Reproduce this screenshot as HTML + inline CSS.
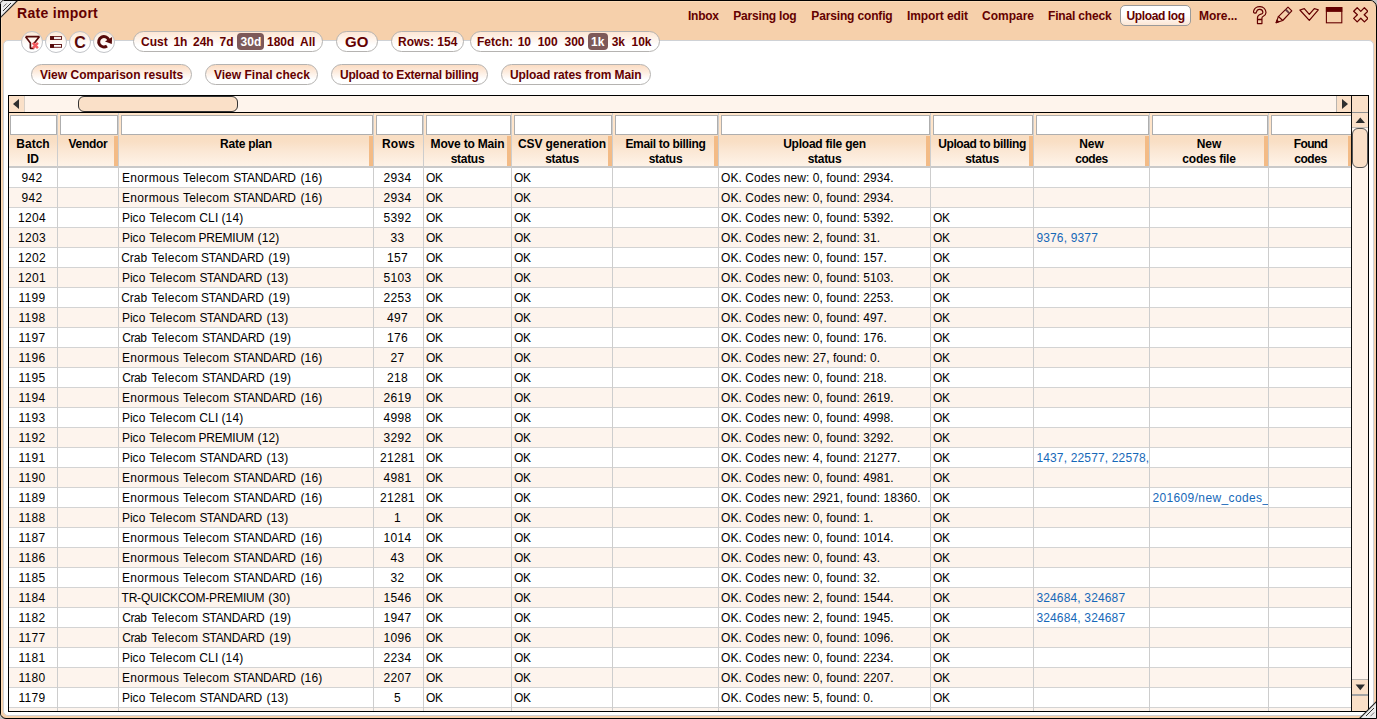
<!DOCTYPE html>
<html><head><meta charset="utf-8"><title>Rate import</title>
<style>
html,body{margin:0;padding:0;}
body{width:1377px;height:719px;overflow:hidden;background:#c4c4c4;font-family:"Liberation Sans",sans-serif;font-size:12px;color:#000;position:relative;}
#win{position:absolute;left:0;top:0;width:1375px;height:717px;border:1px solid #000;background:#f6d0ab;border-radius:0 7px 0 6px;overflow:hidden;}
#abs{position:absolute;left:-1px;top:-1px;width:1377px;height:719px;}
#abs div,#abs span,#abs b,#abs i,#abs svg{position:absolute;box-sizing:border-box;}
#hl1{left:1px;top:1px;width:1375px;height:1px;background:#fcdcb9;}
#hl2{left:1px;top:1px;width:1px;height:717px;background:#fcdcb9;}
#panel{left:3px;top:40px;width:1371px;height:676px;background:#fff;border:1px solid #cfd2d6;border-radius:5px;}
.t{font-weight:bold;color:#640000;white-space:nowrap;line-height:16px;height:16px;}
#title{left:17px;top:3px;font-size:14px;letter-spacing:0.3px;line-height:20px;height:20px;}
.m{top:8px;}
#ulog{left:1120px;top:5px;width:71px;height:21px;background:linear-gradient(#fff 0%,#fff 45%,#fce6d4 100%);border:1px solid #9a9a9a;border-radius:5px;}
.circ{top:31px;width:22px;height:22px;border-radius:11px;border:1px solid #c2c4c8;background:linear-gradient(#fde9d6 0%,#fef6ef 40%,#ffffff 65%,#ffffff 100%);}
.pill{height:21px;border-radius:11px;border:1px solid #b5b3b1;background:linear-gradient(#fde6d4 0%,#fef3ea 35%,#ffffff 70%,#ffffff 100%);}
.pill.b{background:linear-gradient(#fbdcc3 0%,#fdebdd 35%,#ffffff 75%,#ffffff 100%);}
.sel{background:#7d5959;border-radius:4px;}
.w{color:#fff;}
/* grid */
#gborder{left:8px;top:95px;width:1361px;height:617px;border:1px solid #000;}
#hsb{left:9px;top:96px;width:1342px;height:16px;background:#fef4ec;}
.sbtn{background:#fae0c8;}
#hthumb{left:78px;top:96px;width:160px;height:16px;background:#fae0c8;border:1px solid #333;border-radius:6px;}
#hline{left:9px;top:112px;width:1343px;height:1px;background:#000;}
#vline{left:1351px;top:96px;width:1px;height:615px;background:#111;}
#vsb{left:1352px;top:96px;width:16px;height:615px;background:#fef4ec;}
#vthumb{left:1352px;top:128px;width:16px;height:40px;background:#fae0c8;border:1px solid #555;border-radius:6px;}
#frow{left:9px;top:113px;width:1342px;height:22px;background:#ffe5ca;}
#hrow{left:9px;top:135px;width:1342px;height:31px;background:linear-gradient(#f9dec3 0%,#f9dfc5 22%,#fbe7d4 50%,#fef3e8 100%);}
#hbot{left:9px;top:166px;width:1342px;height:2px;background:#c9c9c9;}
.fi{top:115px;height:20px;background:#fff;border:1px solid #aeaeae;}
.hc{top:137px;height:30px;text-align:center;font-weight:bold;line-height:15px;}
.hc span{left:0;right:0;top:0;width:100%;}
.hc u{text-decoration:none;}
.rz{right:0;top:-1px;width:4px;height:30px;background:#f3bb86;}
.r{left:9px;width:1342px;height:20px;background:#fff;border-bottom:1px solid #d3d3d3;}
.r.a{background:#fdf4ed;}
.r b{top:1px;height:18px;line-height:18px;font-weight:normal;white-space:nowrap;overflow:hidden;margin-left:-9px;}
.r b i{top:0;font-style:normal;white-space:nowrap;line-height:18px;}
.r b.c{text-align:center;padding-right:2px;}
.r b.l,.r b.k{padding-left:2.4px;}
.r b.k{color:#1668b8;}
.vs{top:113px;width:1px;height:598px;background:#cdcdcd;}

</style></head>
<body>
<div id="win"><div id="abs">
<div id="hl1"></div><div id="hl2"></div>
<div id="panel"></div>
<!-- top-left grip -->
<svg style="left:0;top:0" width="19" height="19" viewBox="0 0 19 19"><polygon points="0,0 18,0 0,18" fill="#ececec"/><line x1="17.5" y1="0.5" x2="0.5" y2="17.5" stroke="#222" stroke-width="1.2"/><line x1="11" y1="3" x2="3" y2="11" stroke="#333" stroke-width="1"/><line x1="6.7" y1="3.4" x2="3.4" y2="6.7" stroke="#777" stroke-width="1"/><polygon points="0,0 3,0 0,3" fill="#444"/></svg>
<span class="t" id="title">Rate import</span>
<span class="t m" style="left:688px;letter-spacing:-0.25px">Inbox</span>
<span class="t m" style="left:733.3px;letter-spacing:-0.2px">Parsing log</span>
<span class="t m" style="left:811.3px;letter-spacing:-0.15px">Parsing config</span>
<span class="t m" style="left:907px;letter-spacing:-0.1px">Import edit</span>
<span class="t m" style="left:982px">Compare</span>
<span class="t m" style="left:1048px;letter-spacing:-0.18px">Final check</span>
<div id="ulog"></div>
<span class="t m" style="left:1126.5px;letter-spacing:-0.38px">Upload log</span>
<span class="t m" style="left:1199px;letter-spacing:-0.06px">More...</span>
<!-- title icons -->
<svg style="left:1253px;top:5px" width="15" height="21" viewBox="0 0 15 21" fill="none" stroke="#640000" stroke-width="1.2" stroke-linejoin="round"><path d="M0.5 6.4 A6.35 6.35 0 0 1 13.0 7.46 Q12.9 10.1 10.3 11.2 Q8.95 11.8 8.95 12.9 L8.95 18.6 L4.45 18.6 L4.45 12.9 Q4.45 10.4 7.4 9.3 Q9.9 8.6 9.9 7.46 A3.25 3.25 0 0 0 3.5 6.8 A1.5 1.5 0 0 1 0.5 6.4 Z"/><path d="M4.45 14.5 L8.95 14.5" stroke-width="1.7"/></svg>
<svg style="left:1275px;top:6px" width="18" height="18" viewBox="0 0 18 18" fill="none" stroke="#640000" stroke-width="1.15" stroke-linejoin="round"><path d="M3.4 10.55 L13.0 1.15 L16.8 4.9 L7.75 14.5 Z"/><path d="M3.4 10.55 L1.15 16.6 L7.75 14.5"/><path d="M1.15 16.6 L2.0 14.2 L3.7 15.8 Z" fill="#640000"/><path d="M10.6 3.5 L14.5 7.35" stroke="#6a3a42" stroke-width="1.9"/></svg>
<svg style="left:1299px;top:7px" width="21" height="16" viewBox="0 0 21 16" fill="none" stroke="#640000" stroke-width="1.2" stroke-linejoin="round"><path d="M0.9 3 L5.3 1.6 L10.3 7.4 L15.3 1.6 L19.3 2.8 L10.3 13.4 Z"/></svg>
<svg style="left:1325px;top:6px" width="18" height="18" viewBox="0 0 18 18"><rect x="1.4" y="1.6" width="15.4" height="15.2" fill="none" stroke="#640000" stroke-width="1.1"/><rect x="0.9" y="1.1" width="16.4" height="4.8" fill="#640000"/></svg>
<svg style="left:1352.75px;top:6.95px" width="15.6" height="15.6" viewBox="0 0 16 16" fill="none" stroke="#640000" stroke-width="1.3" stroke-linejoin="round"><polygon points="4.3,0.7 8.0,4.5 11.7,0.7 15.3,4.3 11.5,8.0 15.3,11.7 11.7,15.3 8.0,11.5 4.3,15.3 0.7,11.7 4.5,8.0 0.7,4.3"/></svg>
<!-- toolbar -->
<div class="circ" style="left:21px"></div>
<div class="circ" style="left:45px"></div>
<div class="circ" style="left:69px"></div>
<div class="circ" style="left:93px"></div>
<svg style="left:21px;top:31px" width="22" height="22" viewBox="0 0 22 22"><path d="M4.6 5.7 L18.3 5.7 L13 12.6 M4.6 5.7 L9.4 12 L9.4 17.3 L13.2 17.3" fill="none" stroke="#560a0a" stroke-width="1.7" stroke-linejoin="bevel"/><path d="M11.7 11.9 L16.9 17.1 M16.9 11.9 L11.7 17.1" stroke="#f25a5f" stroke-width="2.5"/></svg>
<svg style="left:45px;top:31px" width="22" height="22" viewBox="0 0 22 22"><rect x="5.6" y="5.6" width="10.9" height="2.8" fill="#fff" stroke="#6a2020" stroke-width="1"/><rect x="5.1" y="5.1" width="3.9" height="3.8" fill="#560a0a"/><rect x="5.6" y="13.5" width="10.9" height="2.8" fill="#fff" stroke="#6a2020" stroke-width="1"/><rect x="5.1" y="13" width="3.9" height="3.8" fill="#560a0a"/></svg>
<span class="t" style="left:74.3px;top:34px;font-size:16px;line-height:18px;height:18px;color:#5a0808">C</span>
<svg style="left:93px;top:31px" width="22" height="22" viewBox="0 0 22 22"><path d="M13.96 15.01 A5.2 5.2 0 1 1 15.72 8.85" fill="none" stroke="#560a0a" stroke-width="3"/><path d="M19.1 6 L18.8 12.9 L12 10.5 Z" fill="#560a0a"/></svg>
<div class="pill" style="left:133px;top:31px;width:190px"></div>
<div class="pill" style="left:336px;top:31px;width:42px"></div>
<div class="pill" style="left:391px;top:31px;width:73px"></div>
<div class="pill" style="left:470px;top:31px;width:190px"></div>
<div class="sel" style="left:237px;top:33px;width:27px;height:17px"></div>
<div class="sel" style="left:588px;top:33px;width:20px;height:17px"></div>
<span class="t" style="left:141px;top:34px">Cust</span>
<span class="t" style="left:173.4px;top:34px">1h</span>
<span class="t" style="left:193px;top:34px">24h</span>
<span class="t" style="left:219.6px;top:34px">7d</span>
<span class="t w" style="left:240.6px;top:34px">30d</span>
<span class="t" style="left:267px;top:34px">180d</span>
<span class="t" style="left:300px;top:34px">All</span>
<span class="t" style="left:345px;top:34px;font-size:15px">GO</span>
<span class="t" style="left:398px;top:34px">Rows: 154</span>
<span class="t" style="left:477px;top:34px">Fetch:</span>
<span class="t" style="left:517.7px;top:34px">10</span>
<span class="t" style="left:537.7px;top:34px">100</span>
<span class="t" style="left:564.5px;top:34px">300</span>
<span class="t w" style="left:591px;top:34px">1k</span>
<span class="t" style="left:611.7px;top:34px">3k</span>
<span class="t" style="left:631.5px;top:34px">10k</span>
<!-- button row -->
<div class="pill b" style="left:31px;top:64px;width:161px"></div>
<div class="pill b" style="left:205px;top:64px;width:113px"></div>
<div class="pill b" style="left:331px;top:64px;width:157px"></div>
<div class="pill b" style="left:501px;top:64px;width:150px"></div>
<span class="t" style="left:40px;top:67px">View Comparison results</span>
<span class="t" style="left:214px;top:67px">View Final check</span>
<span class="t" style="left:340px;top:67px;letter-spacing:-0.23px">Upload to External billing</span>
<span class="t" style="left:510px;top:67px;letter-spacing:-0.085px">Upload rates from Main</span>
<!-- grid background -->
<div id="frow"></div>
<div id="hrow"></div>
<div id="hbot"></div>
<div id="grid">
<div class="fi" style="left:10px;width:47px"></div>
<div class="hc" style="left:9px;width:48px"><span><u style="letter-spacing:0.00px">Batch</u><br><u style="letter-spacing:0.00px">ID</u></span></div>
<div class="fi" style="left:60px;width:58px"></div>
<div class="hc" style="left:58px;width:60px"><span><u style="letter-spacing:-0.30px">Vendor</u></span><i class="rz"></i></div>
<div class="fi" style="left:121px;width:252px"></div>
<div class="hc" style="left:119px;width:254px"><span><u style="letter-spacing:-0.25px">Rate plan</u></span><i class="rz"></i></div>
<div class="fi" style="left:376px;width:47px"></div>
<div class="hc" style="left:374px;width:49px"><span><u style="letter-spacing:0.30px">Rows</u></span></div>
<div class="fi" style="left:426px;width:85px"></div>
<div class="hc" style="left:424px;width:87px"><span><u style="letter-spacing:-0.18px">Move to Main</u><br><u style="letter-spacing:-0.30px">status</u></span><i class="rz"></i></div>
<div class="fi" style="left:514px;width:98px"></div>
<div class="hc" style="left:512px;width:100px"><span><u style="letter-spacing:-0.08px">CSV generation</u><br><u style="letter-spacing:-0.30px">status</u></span><i class="rz"></i></div>
<div class="fi" style="left:615px;width:103px"></div>
<div class="hc" style="left:613px;width:105px"><span><u style="letter-spacing:-0.32px">Email to billing</u><br><u style="letter-spacing:-0.30px">status</u></span><i class="rz"></i></div>
<div class="fi" style="left:721px;width:209px"></div>
<div class="hc" style="left:719px;width:211px"><span><u style="letter-spacing:-0.22px">Upload file gen</u><br><u style="letter-spacing:-0.30px">status</u></span><i class="rz"></i></div>
<div class="fi" style="left:933px;width:100px"></div>
<div class="hc" style="left:931px;width:102px"><span><u style="letter-spacing:-0.37px">Upload to billing</u><br><u style="letter-spacing:-0.30px">status</u></span><i class="rz"></i></div>
<div class="fi" style="left:1036px;width:113px"></div>
<div class="hc" style="left:1034px;width:115px"><span><u style="letter-spacing:0.00px">New</u><br><u style="letter-spacing:-0.40px">codes</u></span><i class="rz"></i></div>
<div class="fi" style="left:1152px;width:116px"></div>
<div class="hc" style="left:1150px;width:118px"><span><u style="letter-spacing:0.00px">New</u><br><u style="letter-spacing:-0.20px">codes file</u></span><i class="rz"></i></div>
<div class="fi" style="left:1271px;width:81px"></div>
<div class="hc" style="left:1269px;width:83px"><span><u style="letter-spacing:-0.60px">Found</u><br><u style="letter-spacing:-0.40px">codes</u></span><i class="rz"></i></div>
<div class="r" style="top:168px">
<b class="c" style="left:9px;width:48px;letter-spacing:0.3px">942</b>
<b class="p" style="left:119px;width:254px"><i style="left:2.9px;letter-spacing:0.36px">Enormous</i><i style="left:63.9px;letter-spacing:0.28px">Telecom</i><i style="left:114.2px;letter-spacing:-0.33px">STANDARD</i><i style="left:181.4px;letter-spacing:0.17px">(16)</i></b>
<b class="c" style="left:374px;width:49px;letter-spacing:0.3px">2934</b>
<b class="l" style="left:424px;width:87px;letter-spacing:-0.4px;padding-left:2px">OK</b>
<b class="l" style="left:512px;width:100px;letter-spacing:-0.4px;padding-left:2px">OK</b>
<b class="l" style="left:719px;width:211px;letter-spacing:0.06px;padding-left:2.1px">OK. Codes new: 0, found: 2934.</b>
</div>
<div class="r a" style="top:188px">
<b class="c" style="left:9px;width:48px;letter-spacing:0.3px">942</b>
<b class="p" style="left:119px;width:254px"><i style="left:2.9px;letter-spacing:0.36px">Enormous</i><i style="left:63.9px;letter-spacing:0.28px">Telecom</i><i style="left:114.2px;letter-spacing:-0.33px">STANDARD</i><i style="left:181.4px;letter-spacing:0.17px">(16)</i></b>
<b class="c" style="left:374px;width:49px;letter-spacing:0.3px">2934</b>
<b class="l" style="left:424px;width:87px;letter-spacing:-0.4px;padding-left:2px">OK</b>
<b class="l" style="left:512px;width:100px;letter-spacing:-0.4px;padding-left:2px">OK</b>
<b class="l" style="left:719px;width:211px;letter-spacing:0.06px;padding-left:2.1px">OK. Codes new: 0, found: 2934.</b>
</div>
<div class="r" style="top:208px">
<b class="c" style="left:9px;width:48px;letter-spacing:0.3px">1204</b>
<b class="p" style="left:119px;width:254px"><i style="left:2.9px;letter-spacing:0.03px">Pico</i><i style="left:30.5px;letter-spacing:0.28px">Telecom</i><i style="left:80.3px;letter-spacing:0.15px">CLI</i><i style="left:102.4px;letter-spacing:0.17px">(14)</i></b>
<b class="c" style="left:374px;width:49px;letter-spacing:0.3px">5392</b>
<b class="l" style="left:424px;width:87px;letter-spacing:-0.4px;padding-left:2px">OK</b>
<b class="l" style="left:512px;width:100px;letter-spacing:-0.4px;padding-left:2px">OK</b>
<b class="l" style="left:719px;width:211px;letter-spacing:0.06px;padding-left:2.1px">OK. Codes new: 0, found: 5392.</b>
<b class="l" style="left:931px;width:102px;letter-spacing:-0.4px;padding-left:2px">OK</b>
</div>
<div class="r a" style="top:228px">
<b class="c" style="left:9px;width:48px;letter-spacing:0.3px">1203</b>
<b class="p" style="left:119px;width:254px"><i style="left:2.9px;letter-spacing:0.03px">Pico</i><i style="left:30.5px;letter-spacing:0.28px">Telecom</i><i style="left:79.6px;letter-spacing:-0.23px">PREMIUM</i><i style="left:138.5px;letter-spacing:0.17px">(12)</i></b>
<b class="c" style="left:374px;width:49px;letter-spacing:0.3px">33</b>
<b class="l" style="left:424px;width:87px;letter-spacing:-0.4px;padding-left:2px">OK</b>
<b class="l" style="left:512px;width:100px;letter-spacing:-0.4px;padding-left:2px">OK</b>
<b class="l" style="left:719px;width:211px;letter-spacing:0.06px;padding-left:2.1px">OK. Codes new: 2, found: 31.</b>
<b class="l" style="left:931px;width:102px;letter-spacing:-0.4px;padding-left:2px">OK</b>
<b class="k" style="left:1034px;width:115px;letter-spacing:0.15px">9376, 9377</b>
</div>
<div class="r" style="top:248px">
<b class="c" style="left:9px;width:48px;letter-spacing:0.3px">1202</b>
<b class="p" style="left:119px;width:254px"><i style="left:2.2px;letter-spacing:0.00px">Crab</i><i style="left:32.6px;letter-spacing:0.28px">Telecom</i><i style="left:82.1px;letter-spacing:-0.33px">STANDARD</i><i style="left:149.2px;letter-spacing:0.17px">(19)</i></b>
<b class="c" style="left:374px;width:49px;letter-spacing:0.3px">157</b>
<b class="l" style="left:424px;width:87px;letter-spacing:-0.4px;padding-left:2px">OK</b>
<b class="l" style="left:512px;width:100px;letter-spacing:-0.4px;padding-left:2px">OK</b>
<b class="l" style="left:719px;width:211px;letter-spacing:0.06px;padding-left:2.1px">OK. Codes new: 0, found: 157.</b>
<b class="l" style="left:931px;width:102px;letter-spacing:-0.4px;padding-left:2px">OK</b>
</div>
<div class="r a" style="top:268px">
<b class="c" style="left:9px;width:48px;letter-spacing:0.3px">1201</b>
<b class="p" style="left:119px;width:254px"><i style="left:2.9px;letter-spacing:0.03px">Pico</i><i style="left:30.5px;letter-spacing:0.28px">Telecom</i><i style="left:80.4px;letter-spacing:-0.33px">STANDARD</i><i style="left:147.5px;letter-spacing:0.17px">(13)</i></b>
<b class="c" style="left:374px;width:49px;letter-spacing:0.3px">5103</b>
<b class="l" style="left:424px;width:87px;letter-spacing:-0.4px;padding-left:2px">OK</b>
<b class="l" style="left:512px;width:100px;letter-spacing:-0.4px;padding-left:2px">OK</b>
<b class="l" style="left:719px;width:211px;letter-spacing:0.06px;padding-left:2.1px">OK. Codes new: 0, found: 5103.</b>
<b class="l" style="left:931px;width:102px;letter-spacing:-0.4px;padding-left:2px">OK</b>
</div>
<div class="r" style="top:288px">
<b class="c" style="left:9px;width:48px;letter-spacing:0.3px">1199</b>
<b class="p" style="left:119px;width:254px"><i style="left:2.2px;letter-spacing:0.00px">Crab</i><i style="left:32.6px;letter-spacing:0.28px">Telecom</i><i style="left:82.1px;letter-spacing:-0.33px">STANDARD</i><i style="left:149.2px;letter-spacing:0.17px">(19)</i></b>
<b class="c" style="left:374px;width:49px;letter-spacing:0.3px">2253</b>
<b class="l" style="left:424px;width:87px;letter-spacing:-0.4px;padding-left:2px">OK</b>
<b class="l" style="left:512px;width:100px;letter-spacing:-0.4px;padding-left:2px">OK</b>
<b class="l" style="left:719px;width:211px;letter-spacing:0.06px;padding-left:2.1px">OK. Codes new: 0, found: 2253.</b>
<b class="l" style="left:931px;width:102px;letter-spacing:-0.4px;padding-left:2px">OK</b>
</div>
<div class="r a" style="top:308px">
<b class="c" style="left:9px;width:48px;letter-spacing:0.3px">1198</b>
<b class="p" style="left:119px;width:254px"><i style="left:2.9px;letter-spacing:0.03px">Pico</i><i style="left:30.5px;letter-spacing:0.28px">Telecom</i><i style="left:80.4px;letter-spacing:-0.33px">STANDARD</i><i style="left:147.5px;letter-spacing:0.17px">(13)</i></b>
<b class="c" style="left:374px;width:49px;letter-spacing:0.3px">497</b>
<b class="l" style="left:424px;width:87px;letter-spacing:-0.4px;padding-left:2px">OK</b>
<b class="l" style="left:512px;width:100px;letter-spacing:-0.4px;padding-left:2px">OK</b>
<b class="l" style="left:719px;width:211px;letter-spacing:0.06px;padding-left:2.1px">OK. Codes new: 0, found: 497.</b>
<b class="l" style="left:931px;width:102px;letter-spacing:-0.4px;padding-left:2px">OK</b>
</div>
<div class="r" style="top:328px">
<b class="c" style="left:9px;width:48px;letter-spacing:0.3px">1197</b>
<b class="p" style="left:119px;width:254px"><i style="left:3.2px;letter-spacing:-0.40px">Crab</i><i style="left:32.6px;letter-spacing:0.28px">Telecom</i><i style="left:82.9px;letter-spacing:-0.33px">STANDARD</i><i style="left:150.2px;letter-spacing:0.17px">(19)</i></b>
<b class="c" style="left:374px;width:49px;letter-spacing:0.3px">176</b>
<b class="l" style="left:424px;width:87px;letter-spacing:-0.4px;padding-left:2px">OK</b>
<b class="l" style="left:512px;width:100px;letter-spacing:-0.4px;padding-left:2px">OK</b>
<b class="l" style="left:719px;width:211px;letter-spacing:0.06px;padding-left:2.1px">OK. Codes new: 0, found: 176.</b>
<b class="l" style="left:931px;width:102px;letter-spacing:-0.4px;padding-left:2px">OK</b>
</div>
<div class="r a" style="top:348px">
<b class="c" style="left:9px;width:48px;letter-spacing:0.3px">1196</b>
<b class="p" style="left:119px;width:254px"><i style="left:2.9px;letter-spacing:0.36px">Enormous</i><i style="left:63.9px;letter-spacing:0.28px">Telecom</i><i style="left:114.2px;letter-spacing:-0.33px">STANDARD</i><i style="left:181.4px;letter-spacing:0.17px">(16)</i></b>
<b class="c" style="left:374px;width:49px;letter-spacing:0.3px">27</b>
<b class="l" style="left:424px;width:87px;letter-spacing:-0.4px;padding-left:2px">OK</b>
<b class="l" style="left:512px;width:100px;letter-spacing:-0.4px;padding-left:2px">OK</b>
<b class="l" style="left:719px;width:211px;letter-spacing:0.06px;padding-left:2.1px">OK. Codes new: 27, found: 0.</b>
<b class="l" style="left:931px;width:102px;letter-spacing:-0.4px;padding-left:2px">OK</b>
</div>
<div class="r" style="top:368px">
<b class="c" style="left:9px;width:48px;letter-spacing:0.3px">1195</b>
<b class="p" style="left:119px;width:254px"><i style="left:3.2px;letter-spacing:-0.40px">Crab</i><i style="left:32.6px;letter-spacing:0.28px">Telecom</i><i style="left:82.9px;letter-spacing:-0.33px">STANDARD</i><i style="left:150.2px;letter-spacing:0.17px">(19)</i></b>
<b class="c" style="left:374px;width:49px;letter-spacing:0.3px">218</b>
<b class="l" style="left:424px;width:87px;letter-spacing:-0.4px;padding-left:2px">OK</b>
<b class="l" style="left:512px;width:100px;letter-spacing:-0.4px;padding-left:2px">OK</b>
<b class="l" style="left:719px;width:211px;letter-spacing:0.06px;padding-left:2.1px">OK. Codes new: 0, found: 218.</b>
<b class="l" style="left:931px;width:102px;letter-spacing:-0.4px;padding-left:2px">OK</b>
</div>
<div class="r a" style="top:388px">
<b class="c" style="left:9px;width:48px;letter-spacing:0.3px">1194</b>
<b class="p" style="left:119px;width:254px"><i style="left:2.9px;letter-spacing:0.36px">Enormous</i><i style="left:63.9px;letter-spacing:0.28px">Telecom</i><i style="left:114.2px;letter-spacing:-0.33px">STANDARD</i><i style="left:181.4px;letter-spacing:0.17px">(16)</i></b>
<b class="c" style="left:374px;width:49px;letter-spacing:0.3px">2619</b>
<b class="l" style="left:424px;width:87px;letter-spacing:-0.4px;padding-left:2px">OK</b>
<b class="l" style="left:512px;width:100px;letter-spacing:-0.4px;padding-left:2px">OK</b>
<b class="l" style="left:719px;width:211px;letter-spacing:0.06px;padding-left:2.1px">OK. Codes new: 0, found: 2619.</b>
<b class="l" style="left:931px;width:102px;letter-spacing:-0.4px;padding-left:2px">OK</b>
</div>
<div class="r" style="top:408px">
<b class="c" style="left:9px;width:48px;letter-spacing:0.3px">1193</b>
<b class="p" style="left:119px;width:254px"><i style="left:2.9px;letter-spacing:0.03px">Pico</i><i style="left:30.5px;letter-spacing:0.28px">Telecom</i><i style="left:80.3px;letter-spacing:0.15px">CLI</i><i style="left:102.4px;letter-spacing:0.17px">(14)</i></b>
<b class="c" style="left:374px;width:49px;letter-spacing:0.3px">4998</b>
<b class="l" style="left:424px;width:87px;letter-spacing:-0.4px;padding-left:2px">OK</b>
<b class="l" style="left:512px;width:100px;letter-spacing:-0.4px;padding-left:2px">OK</b>
<b class="l" style="left:719px;width:211px;letter-spacing:0.06px;padding-left:2.1px">OK. Codes new: 0, found: 4998.</b>
<b class="l" style="left:931px;width:102px;letter-spacing:-0.4px;padding-left:2px">OK</b>
</div>
<div class="r a" style="top:428px">
<b class="c" style="left:9px;width:48px;letter-spacing:0.3px">1192</b>
<b class="p" style="left:119px;width:254px"><i style="left:2.9px;letter-spacing:0.03px">Pico</i><i style="left:30.5px;letter-spacing:0.28px">Telecom</i><i style="left:79.6px;letter-spacing:-0.23px">PREMIUM</i><i style="left:138.5px;letter-spacing:0.17px">(12)</i></b>
<b class="c" style="left:374px;width:49px;letter-spacing:0.3px">3292</b>
<b class="l" style="left:424px;width:87px;letter-spacing:-0.4px;padding-left:2px">OK</b>
<b class="l" style="left:512px;width:100px;letter-spacing:-0.4px;padding-left:2px">OK</b>
<b class="l" style="left:719px;width:211px;letter-spacing:0.06px;padding-left:2.1px">OK. Codes new: 0, found: 3292.</b>
<b class="l" style="left:931px;width:102px;letter-spacing:-0.4px;padding-left:2px">OK</b>
</div>
<div class="r" style="top:448px">
<b class="c" style="left:9px;width:48px;letter-spacing:0.3px">1191</b>
<b class="p" style="left:119px;width:254px"><i style="left:2.9px;letter-spacing:0.03px">Pico</i><i style="left:30.5px;letter-spacing:0.28px">Telecom</i><i style="left:80.4px;letter-spacing:-0.33px">STANDARD</i><i style="left:147.5px;letter-spacing:0.17px">(13)</i></b>
<b class="c" style="left:374px;width:49px;letter-spacing:0.3px">21281</b>
<b class="l" style="left:424px;width:87px;letter-spacing:-0.4px;padding-left:2px">OK</b>
<b class="l" style="left:512px;width:100px;letter-spacing:-0.4px;padding-left:2px">OK</b>
<b class="l" style="left:719px;width:211px;letter-spacing:0.06px;padding-left:2.1px">OK. Codes new: 4, found: 21277.</b>
<b class="l" style="left:931px;width:102px;letter-spacing:-0.4px;padding-left:2px">OK</b>
<b class="k" style="left:1034px;width:115px;letter-spacing:0.15px">1437, 22577, 22578,</b>
</div>
<div class="r a" style="top:468px">
<b class="c" style="left:9px;width:48px;letter-spacing:0.3px">1190</b>
<b class="p" style="left:119px;width:254px"><i style="left:2.9px;letter-spacing:0.36px">Enormous</i><i style="left:63.9px;letter-spacing:0.28px">Telecom</i><i style="left:114.2px;letter-spacing:-0.33px">STANDARD</i><i style="left:181.4px;letter-spacing:0.17px">(16)</i></b>
<b class="c" style="left:374px;width:49px;letter-spacing:0.3px">4981</b>
<b class="l" style="left:424px;width:87px;letter-spacing:-0.4px;padding-left:2px">OK</b>
<b class="l" style="left:512px;width:100px;letter-spacing:-0.4px;padding-left:2px">OK</b>
<b class="l" style="left:719px;width:211px;letter-spacing:0.06px;padding-left:2.1px">OK. Codes new: 0, found: 4981.</b>
<b class="l" style="left:931px;width:102px;letter-spacing:-0.4px;padding-left:2px">OK</b>
</div>
<div class="r" style="top:488px">
<b class="c" style="left:9px;width:48px;letter-spacing:0.3px">1189</b>
<b class="p" style="left:119px;width:254px"><i style="left:2.9px;letter-spacing:0.36px">Enormous</i><i style="left:63.9px;letter-spacing:0.28px">Telecom</i><i style="left:114.2px;letter-spacing:-0.33px">STANDARD</i><i style="left:181.4px;letter-spacing:0.17px">(16)</i></b>
<b class="c" style="left:374px;width:49px;letter-spacing:0.3px">21281</b>
<b class="l" style="left:424px;width:87px;letter-spacing:-0.4px;padding-left:2px">OK</b>
<b class="l" style="left:512px;width:100px;letter-spacing:-0.4px;padding-left:2px">OK</b>
<b class="l" style="left:719px;width:211px;letter-spacing:0.06px;padding-left:2.1px">OK. Codes new: 2921, found: 18360.</b>
<b class="l" style="left:931px;width:102px;letter-spacing:-0.4px;padding-left:2px">OK</b>
<b class="k" style="left:1150px;width:118px;letter-spacing:0.37px">201609/new_codes_</b>
</div>
<div class="r a" style="top:508px">
<b class="c" style="left:9px;width:48px;letter-spacing:0.3px">1188</b>
<b class="p" style="left:119px;width:254px"><i style="left:2.9px;letter-spacing:0.03px">Pico</i><i style="left:30.5px;letter-spacing:0.28px">Telecom</i><i style="left:80.4px;letter-spacing:-0.33px">STANDARD</i><i style="left:147.5px;letter-spacing:0.17px">(13)</i></b>
<b class="c" style="left:374px;width:49px;letter-spacing:0.3px">1</b>
<b class="l" style="left:424px;width:87px;letter-spacing:-0.4px;padding-left:2px">OK</b>
<b class="l" style="left:512px;width:100px;letter-spacing:-0.4px;padding-left:2px">OK</b>
<b class="l" style="left:719px;width:211px;letter-spacing:0.06px;padding-left:2.1px">OK. Codes new: 0, found: 1.</b>
<b class="l" style="left:931px;width:102px;letter-spacing:-0.4px;padding-left:2px">OK</b>
</div>
<div class="r" style="top:528px">
<b class="c" style="left:9px;width:48px;letter-spacing:0.3px">1187</b>
<b class="p" style="left:119px;width:254px"><i style="left:2.9px;letter-spacing:0.36px">Enormous</i><i style="left:63.9px;letter-spacing:0.28px">Telecom</i><i style="left:114.2px;letter-spacing:-0.33px">STANDARD</i><i style="left:181.4px;letter-spacing:0.17px">(16)</i></b>
<b class="c" style="left:374px;width:49px;letter-spacing:0.3px">1014</b>
<b class="l" style="left:424px;width:87px;letter-spacing:-0.4px;padding-left:2px">OK</b>
<b class="l" style="left:512px;width:100px;letter-spacing:-0.4px;padding-left:2px">OK</b>
<b class="l" style="left:719px;width:211px;letter-spacing:0.06px;padding-left:2.1px">OK. Codes new: 0, found: 1014.</b>
<b class="l" style="left:931px;width:102px;letter-spacing:-0.4px;padding-left:2px">OK</b>
</div>
<div class="r a" style="top:548px">
<b class="c" style="left:9px;width:48px;letter-spacing:0.3px">1186</b>
<b class="p" style="left:119px;width:254px"><i style="left:2.9px;letter-spacing:0.36px">Enormous</i><i style="left:63.9px;letter-spacing:0.28px">Telecom</i><i style="left:114.2px;letter-spacing:-0.33px">STANDARD</i><i style="left:181.4px;letter-spacing:0.17px">(16)</i></b>
<b class="c" style="left:374px;width:49px;letter-spacing:0.3px">43</b>
<b class="l" style="left:424px;width:87px;letter-spacing:-0.4px;padding-left:2px">OK</b>
<b class="l" style="left:512px;width:100px;letter-spacing:-0.4px;padding-left:2px">OK</b>
<b class="l" style="left:719px;width:211px;letter-spacing:0.06px;padding-left:2.1px">OK. Codes new: 0, found: 43.</b>
<b class="l" style="left:931px;width:102px;letter-spacing:-0.4px;padding-left:2px">OK</b>
</div>
<div class="r" style="top:568px">
<b class="c" style="left:9px;width:48px;letter-spacing:0.3px">1185</b>
<b class="p" style="left:119px;width:254px"><i style="left:2.9px;letter-spacing:0.36px">Enormous</i><i style="left:63.9px;letter-spacing:0.28px">Telecom</i><i style="left:114.2px;letter-spacing:-0.33px">STANDARD</i><i style="left:181.4px;letter-spacing:0.17px">(16)</i></b>
<b class="c" style="left:374px;width:49px;letter-spacing:0.3px">32</b>
<b class="l" style="left:424px;width:87px;letter-spacing:-0.4px;padding-left:2px">OK</b>
<b class="l" style="left:512px;width:100px;letter-spacing:-0.4px;padding-left:2px">OK</b>
<b class="l" style="left:719px;width:211px;letter-spacing:0.06px;padding-left:2.1px">OK. Codes new: 0, found: 32.</b>
<b class="l" style="left:931px;width:102px;letter-spacing:-0.4px;padding-left:2px">OK</b>
</div>
<div class="r a" style="top:588px">
<b class="c" style="left:9px;width:48px;letter-spacing:0.3px">1184</b>
<b class="p" style="left:119px;width:254px"><i style="left:2.5px;letter-spacing:-0.20px">TR-QUICKCOM-PREMIUM</i><i style="left:149.3px;letter-spacing:0.17px">(30)</i></b>
<b class="c" style="left:374px;width:49px;letter-spacing:0.3px">1546</b>
<b class="l" style="left:424px;width:87px;letter-spacing:-0.4px;padding-left:2px">OK</b>
<b class="l" style="left:512px;width:100px;letter-spacing:-0.4px;padding-left:2px">OK</b>
<b class="l" style="left:719px;width:211px;letter-spacing:0.06px;padding-left:2.1px">OK. Codes new: 2, found: 1544.</b>
<b class="l" style="left:931px;width:102px;letter-spacing:-0.4px;padding-left:2px">OK</b>
<b class="k" style="left:1034px;width:115px;letter-spacing:0.15px">324684, 324687</b>
</div>
<div class="r" style="top:608px">
<b class="c" style="left:9px;width:48px;letter-spacing:0.3px">1182</b>
<b class="p" style="left:119px;width:254px"><i style="left:3.2px;letter-spacing:-0.40px">Crab</i><i style="left:32.6px;letter-spacing:0.28px">Telecom</i><i style="left:82.9px;letter-spacing:-0.33px">STANDARD</i><i style="left:150.2px;letter-spacing:0.17px">(19)</i></b>
<b class="c" style="left:374px;width:49px;letter-spacing:0.3px">1947</b>
<b class="l" style="left:424px;width:87px;letter-spacing:-0.4px;padding-left:2px">OK</b>
<b class="l" style="left:512px;width:100px;letter-spacing:-0.4px;padding-left:2px">OK</b>
<b class="l" style="left:719px;width:211px;letter-spacing:0.06px;padding-left:2.1px">OK. Codes new: 2, found: 1945.</b>
<b class="l" style="left:931px;width:102px;letter-spacing:-0.4px;padding-left:2px">OK</b>
<b class="k" style="left:1034px;width:115px;letter-spacing:0.15px">324684, 324687</b>
</div>
<div class="r a" style="top:628px">
<b class="c" style="left:9px;width:48px;letter-spacing:0.3px">1177</b>
<b class="p" style="left:119px;width:254px"><i style="left:3.2px;letter-spacing:-0.40px">Crab</i><i style="left:32.6px;letter-spacing:0.28px">Telecom</i><i style="left:82.9px;letter-spacing:-0.33px">STANDARD</i><i style="left:150.2px;letter-spacing:0.17px">(19)</i></b>
<b class="c" style="left:374px;width:49px;letter-spacing:0.3px">1096</b>
<b class="l" style="left:424px;width:87px;letter-spacing:-0.4px;padding-left:2px">OK</b>
<b class="l" style="left:512px;width:100px;letter-spacing:-0.4px;padding-left:2px">OK</b>
<b class="l" style="left:719px;width:211px;letter-spacing:0.06px;padding-left:2.1px">OK. Codes new: 0, found: 1096.</b>
<b class="l" style="left:931px;width:102px;letter-spacing:-0.4px;padding-left:2px">OK</b>
</div>
<div class="r" style="top:648px">
<b class="c" style="left:9px;width:48px;letter-spacing:0.3px">1181</b>
<b class="p" style="left:119px;width:254px"><i style="left:2.9px;letter-spacing:0.03px">Pico</i><i style="left:30.5px;letter-spacing:0.28px">Telecom</i><i style="left:80.3px;letter-spacing:0.15px">CLI</i><i style="left:102.4px;letter-spacing:0.17px">(14)</i></b>
<b class="c" style="left:374px;width:49px;letter-spacing:0.3px">2234</b>
<b class="l" style="left:424px;width:87px;letter-spacing:-0.4px;padding-left:2px">OK</b>
<b class="l" style="left:512px;width:100px;letter-spacing:-0.4px;padding-left:2px">OK</b>
<b class="l" style="left:719px;width:211px;letter-spacing:0.06px;padding-left:2.1px">OK. Codes new: 0, found: 2234.</b>
<b class="l" style="left:931px;width:102px;letter-spacing:-0.4px;padding-left:2px">OK</b>
</div>
<div class="r a" style="top:668px">
<b class="c" style="left:9px;width:48px;letter-spacing:0.3px">1180</b>
<b class="p" style="left:119px;width:254px"><i style="left:2.9px;letter-spacing:0.36px">Enormous</i><i style="left:63.9px;letter-spacing:0.28px">Telecom</i><i style="left:114.2px;letter-spacing:-0.33px">STANDARD</i><i style="left:181.4px;letter-spacing:0.17px">(16)</i></b>
<b class="c" style="left:374px;width:49px;letter-spacing:0.3px">2207</b>
<b class="l" style="left:424px;width:87px;letter-spacing:-0.4px;padding-left:2px">OK</b>
<b class="l" style="left:512px;width:100px;letter-spacing:-0.4px;padding-left:2px">OK</b>
<b class="l" style="left:719px;width:211px;letter-spacing:0.06px;padding-left:2.1px">OK. Codes new: 0, found: 2207.</b>
<b class="l" style="left:931px;width:102px;letter-spacing:-0.4px;padding-left:2px">OK</b>
</div>
<div class="r" style="top:688px">
<b class="c" style="left:9px;width:48px;letter-spacing:0.3px">1179</b>
<b class="p" style="left:119px;width:254px"><i style="left:2.9px;letter-spacing:0.03px">Pico</i><i style="left:30.5px;letter-spacing:0.28px">Telecom</i><i style="left:80.4px;letter-spacing:-0.33px">STANDARD</i><i style="left:147.5px;letter-spacing:0.17px">(13)</i></b>
<b class="c" style="left:374px;width:49px;letter-spacing:0.3px">5</b>
<b class="l" style="left:424px;width:87px;letter-spacing:-0.4px;padding-left:2px">OK</b>
<b class="l" style="left:512px;width:100px;letter-spacing:-0.4px;padding-left:2px">OK</b>
<b class="l" style="left:719px;width:211px;letter-spacing:0.06px;padding-left:2.1px">OK. Codes new: 5, found: 0.</b>
<b class="l" style="left:931px;width:102px;letter-spacing:-0.4px;padding-left:2px">OK</b>
</div>
<div class="r a" style="top:708px;height:3px;border:0">
</div>
<div class="vs" style="left:57px"></div>
<div class="vs" style="left:118px"></div>
<div class="vs" style="left:373px"></div>
<div class="vs" style="left:423px"></div>
<div class="vs" style="left:511px"></div>
<div class="vs" style="left:612px"></div>
<div class="vs" style="left:718px"></div>
<div class="vs" style="left:930px"></div>
<div class="vs" style="left:1033px"></div>
<div class="vs" style="left:1149px"></div>
<div class="vs" style="left:1268px"></div>
</div><!-- scrollbars -->
<div id="hsb"></div>
<div class="sbtn" style="left:9px;top:96px;width:16px;height:16px;border-right:1px solid #d8cfc6"></div>
<svg style="left:12px;top:99px" width="8" height="10" viewBox="0 0 8 10"><polygon points="7,0 7,10 1,5" fill="#2e2e2e"/></svg>
<div class="sbtn" style="left:1336px;top:96px;width:15px;height:16px;border-left:1px solid #b9b4af"></div>
<svg style="left:1341px;top:99px" width="8" height="10" viewBox="0 0 8 10"><polygon points="1,0 1,10 7,5" fill="#2e2e2e"/></svg>
<div id="hthumb"></div>
<div id="vsb"></div>
<div class="sbtn" style="left:1352px;top:96px;width:16px;height:16px"></div>
<div style="left:1352px;top:112px;width:16px;height:1px;background:#8f8f8f"></div>
<div class="sbtn" style="left:1352px;top:113px;width:16px;height:15px;border-bottom:1px solid #c4bdb6"></div>
<svg style="left:1355px;top:117px" width="11" height="7" viewBox="0 0 11 7"><polygon points="0.6,6 10,6 5.3,0.4" fill="#2e2e2e"/></svg>
<div class="sbtn" style="left:1352px;top:679px;width:16px;height:16px;border-top:1px solid #b9b4af"></div>
<svg style="left:1355px;top:684px" width="11" height="7" viewBox="0 0 11 7"><polygon points="0.6,0.6 10,0.6 5.3,6.2" fill="#2e2e2e"/></svg>
<div style="left:1352px;top:694px;width:16px;height:2px;background:#a3a3a3"></div>
<div class="sbtn" style="left:1352px;top:696px;width:16px;height:15px"></div>
<div id="vthumb"></div>
<div id="hline"></div>
<div id="vline"></div>
<div id="gborder"></div>
<!-- bottom-right grip -->
<svg style="left:1359px;top:701px" width="18" height="18" viewBox="0 0 18 18"><polygon points="18,0 18,18 0,18" fill="#ececec"/><line x1="17.5" y1="0.5" x2="0.5" y2="17.5" stroke="#222" stroke-width="1.2"/><line x1="15" y1="7" x2="7" y2="15" stroke="#333" stroke-width="1"/><line x1="15.2" y1="11.5" x2="11.5" y2="15.2" stroke="#777" stroke-width="1"/></svg>
</div></div>
<svg style="position:absolute;left:0;top:0" width="4" height="4" viewBox="0 0 4 4"><polygon points="0,0 4,0 0,4" fill="#d6d6d6"/><line x1="3.6" y1="-0.4" x2="-0.4" y2="3.6" stroke="#333" stroke-width="1"/></svg>

</body></html>
